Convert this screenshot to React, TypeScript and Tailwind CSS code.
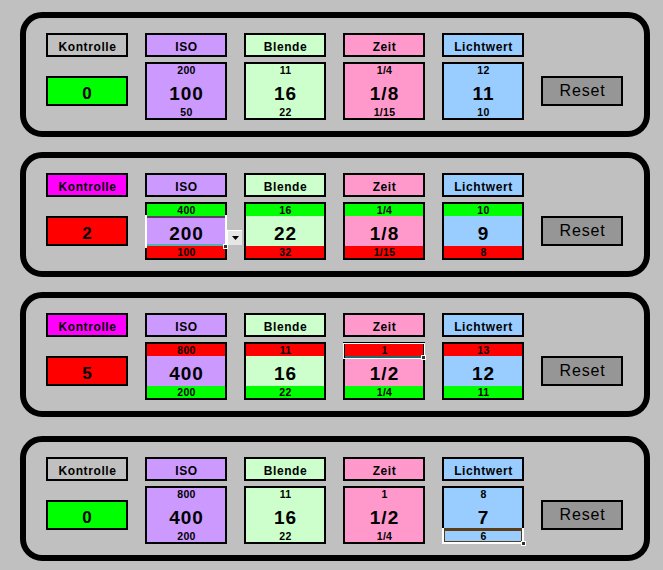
import React from "react";

type Tone = "g" | "r" | undefined;
type Mark = "combo" | "hi" | "lo" | undefined;

interface Meter {
  name: string;
  fill: string;
  hi: string;
  mid: string;
  lo: string;
  hiTone?: Tone;
  loTone?: Tone;
  mark?: Mark;
}

interface Row {
  alert: boolean;
  score: string;
  meters: Meter[];
}

const ISO = "bg-[#cc99ff]";
const BLENDE = "bg-[#ccffcc]";
const ZEIT = "bg-[#ff99cc]";
const LW = "bg-[#99ccff]";

const rows: Row[] = [
  {
    alert: false,
    score: "0",
    meters: [
      { name: "ISO", fill: ISO, hi: "200", mid: "100", lo: "50" },
      { name: "Blende", fill: BLENDE, hi: "11", mid: "16", lo: "22" },
      { name: "Zeit", fill: ZEIT, hi: "1/4", mid: "1/8", lo: "1/15" },
      { name: "Lichtwert", fill: LW, hi: "12", mid: "11", lo: "10" },
    ],
  },
  {
    alert: true,
    score: "2",
    meters: [
      { name: "ISO", fill: ISO, hi: "400", mid: "200", lo: "100", hiTone: "g", loTone: "r", mark: "combo" },
      { name: "Blende", fill: BLENDE, hi: "16", mid: "22", lo: "32", hiTone: "g", loTone: "r" },
      { name: "Zeit", fill: ZEIT, hi: "1/4", mid: "1/8", lo: "1/15", hiTone: "g", loTone: "r" },
      { name: "Lichtwert", fill: LW, hi: "10", mid: "9", lo: "8", hiTone: "g", loTone: "r" },
    ],
  },
  {
    alert: true,
    score: "5",
    meters: [
      { name: "ISO", fill: ISO, hi: "800", mid: "400", lo: "200", hiTone: "r", loTone: "g" },
      { name: "Blende", fill: BLENDE, hi: "11", mid: "16", lo: "22", hiTone: "r", loTone: "g" },
      { name: "Zeit", fill: ZEIT, hi: "1", mid: "1/2", lo: "1/4", hiTone: "r", loTone: "g", mark: "hi" },
      { name: "Lichtwert", fill: LW, hi: "13", mid: "12", lo: "11", hiTone: "r", loTone: "g" },
    ],
  },
  {
    alert: false,
    score: "0",
    meters: [
      { name: "ISO", fill: ISO, hi: "800", mid: "400", lo: "200" },
      { name: "Blende", fill: BLENDE, hi: "11", mid: "16", lo: "22" },
      { name: "Zeit", fill: ZEIT, hi: "1", mid: "1/2", lo: "1/4" },
      { name: "Lichtwert", fill: LW, hi: "8", mid: "7", lo: "6", mark: "lo" },
    ],
  },
];

const tone = (t: Tone, fill: string) =>
  t === "g" ? "bg-[#00ff00]" : t === "r" ? "bg-[#ff0000]" : fill;

function Label({ text, fill }: { text: string; fill: string }) {
  return (
    <div
      className={`h-[24px] w-[82px] border-2 border-black ${fill} flex items-center justify-center pt-[4px] pl-[1px] text-[12px] font-bold tracking-[0.6px] text-black`}
    >
      {text}
    </div>
  );
}

function FillHandle({ cls }: { cls: string }) {
  return <div className={`absolute w-[5px] h-[5px] bg-[#303030] border border-white ${cls}`} />;
}

// Spreadsheet-style active-cell outlines drawn over a meter box
function Selection({ mark }: { mark: Mark }) {
  if (mark === "combo") {
    return (
      <>
        <div className="absolute left-[-2px] right-[-2px] top-[11px] h-[33px] border-l-2 border-r-2 border-white" />
        <div className="absolute left-0 right-0 top-[12px] h-[2px] bg-[#5e3f66]" />
        <div className="absolute left-0 right-0 top-[40px] h-[2px] bg-[#4fb3b3]" />
        <FillHandle cls="right-[-3px] top-[40px]" />
        <div className="absolute right-[-17px] top-[26px] w-[15px] h-[15px] bg-[#e6e6e6] border-l border-t border-white flex items-center justify-center">
          <svg width="7" height="4" viewBox="0 0 7 4">
            <polygon points="0,0 7,0 3.5,4" fill="#000" />
          </svg>
        </div>
      </>
    );
  }
  if (mark === "hi") {
    return (
      <>
        <div className="absolute left-[-2px] right-[-2px] top-[-1px] h-[16px] border border-white" />
        <div className="absolute left-0 right-0 top-[12px] h-[2px] bg-[#1e6b6b]" />
        <FillHandle cls="right-[-3px] top-[11px]" />
      </>
    );
  }
  if (mark === "lo") {
    return (
      <>
        <div className="absolute left-[-2px] right-[-2px] top-[40px] bottom-[-2px] border-l-2 border-r-2 border-b-2 border-white">
          <div className="w-full h-full border border-t-[3px] border-[#5c3b17]" />
        </div>
        <FillHandle cls="right-[-4px] bottom-[-4px]" />
      </>
    );
  }
  return null;
}

function MeterBox({ m }: { m: Meter }) {
  return (
    <div className="relative mt-[5px] h-[58px] w-[82px] border-2 border-black flex flex-col text-black">
      <div
        className={`h-[12px] ${tone(m.hiTone, m.fill)} flex items-center justify-center pl-[1px] text-[10.5px] font-bold tracking-[0.3px] leading-none`}
      >
        {m.hi}
      </div>
      <div
        className={`h-[30px] ${m.fill} flex items-center justify-center pt-[4px] pl-[1px] text-[19px] font-bold tracking-[1px] leading-none`}
      >
        {m.mid}
      </div>
      <div
        className={`h-[12px] ${tone(m.loTone, m.fill)} flex items-center justify-center pl-[1px] text-[10.5px] font-bold tracking-[0.3px] leading-none`}
      >
        {m.lo}
      </div>
      <Selection mark={m.mark} />
    </div>
  );
}

function Panel({ row, gap }: { row: Row; gap: string }) {
  return (
    <div
      className={`${gap} ml-[20px] w-[630px] h-[125px] rounded-[22px] border-[6px] border-black pt-[15px] pl-[20px] flex gap-[17px]`}
    >
      <div className="flex flex-col w-[82px]">
        <Label text="Kontrolle" fill={row.alert ? "bg-[#ff00ff]" : "bg-[#c0c0c0]"} />
        <div className="mt-[5px] h-[58px] flex items-center">
          <div
            className={`h-[30px] w-[82px] border-2 border-black ${row.alert ? "bg-[#ff0000]" : "bg-[#00ff00]"} flex items-center justify-center pt-[4px] text-[17px] font-bold leading-none text-black`}
          >
            {row.score}
          </div>
        </div>
      </div>
      {row.meters.map((m) => (
        <div key={m.name} className="flex flex-col w-[82px]">
          <Label text={m.name} fill={m.fill} />
          <MeterBox m={m} />
        </div>
      ))}
      <div className="flex flex-col w-[82px]">
        <div className="h-[24px]" />
        <div className="mt-[5px] h-[58px] flex items-center">
          <button
            type="button"
            className="h-[30px] w-[82px] border-2 border-black bg-[#969696] flex items-center justify-center pl-[1px] text-[16px] tracking-[0.8px] leading-none text-black"
          >
            Reset
          </button>
        </div>
      </div>
    </div>
  );
}

export default function App() {
  const gaps = ["mt-0", "mt-[15px]", "mt-[15px]", "mt-[19px]"];
  return (
    <div
      className="w-[663px] h-[570px] overflow-hidden bg-[#c0c0c0] pt-[12px]"
      style={{ fontFamily: '"Liberation Sans", Arial, sans-serif' }}
    >
      {rows.map((r, i) => (
        <Panel key={i} row={r} gap={gaps[i]} />
      ))}
    </div>
  );
}
